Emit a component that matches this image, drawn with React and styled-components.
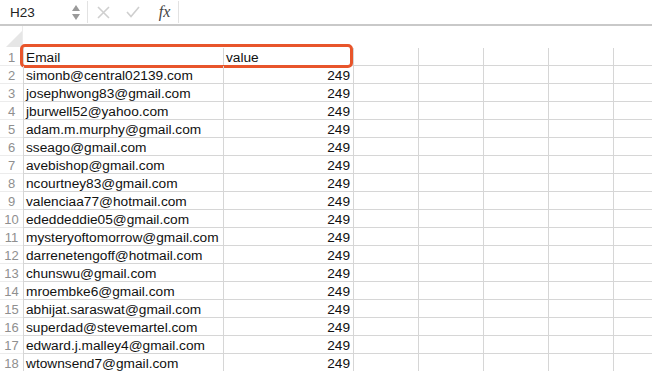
import React from "react";
import styled, { createGlobalStyle } from "styled-components";

const Global = createGlobalStyle`
  html, body { margin: 0; padding: 0; background: #fff; }
  body { font-family: "Liberation Sans", Arial, sans-serif; overflow: hidden; }
`;

const Page = styled.div`
  width: 652px;
  height: 371px;
  overflow: hidden;
  background: #fff;
`;

const Toolbar = styled.div`
  display: flex;
  align-items: center;
  height: 24px;
  border-bottom: 2px solid #c9c9c9;
`;

const NameBox = styled.div`
  width: 61px;
  padding-left: 10px;
  font-size: 13.5px;
  color: #222;
`;

const Spinner = styled.div`
  width: 10px;
  display: flex;
  flex-direction: column;
  align-items: center;
  gap: 3px;
`;

const Sep = styled.div`
  width: 1px;
  height: 22px;
  background: #e2e2e2;
  margin-left: ${(p) => p.$m || 0}px;
`;

const ToolIcon = styled.div`
  width: 30px;
  display: flex;
  justify-content: center;
  align-items: center;
  color: ${(p) => p.$c || "#c8c8c8"};
`;

const Fx = styled.span`
  font-family: "Liberation Serif", "Times New Roman", serif;
  font-style: italic;
  font-size: 16px;
  color: #444;
  margin-left: 3px;
`;

const HeaderRow = styled.div`
  display: flex;
  height: 22px;
`;

const Corner = styled.div`
  width: 23px;
  border-right: 1px solid #ececec;
  display: flex;
  align-items: flex-end;
  justify-content: flex-end;
  padding-bottom: 1px;
  box-sizing: border-box;
`;

const Row = styled.div`
  position: relative;
  display: flex;
  height: 18px;
`;

const RowNum = styled.div`
  width: 23px;
  flex: none;
  text-align: center;
  font-size: 13px;
  line-height: 17px;
  padding-top: 1px;
  color: #8f8f8f;
  border-bottom: 1px solid #ececec;
  box-sizing: border-box;
`;

const Cell = styled.div`
  flex: none;
  width: ${(p) => p.$w}px;
  box-sizing: border-box;
  border-left: 1px solid #d6d6d6;
  border-bottom: 1px solid #d6d6d6;
  font-size: 13.7px;
  line-height: 17px;
  color: #111;
  padding: 1px 3px 0 2px;
  text-align: ${(p) => (p.$right ? "right" : "left")};
  white-space: nowrap;
  overflow: visible;
`;

const Highlight = styled.div`
  position: absolute;
  left: 20px;
  top: -4px;
  width: 333px;
  height: 24px;
  box-sizing: border-box;
  border: 3px solid #e8552b;
  border-radius: 5px;
  pointer-events: none;
`;

const emails = [
  "simonb@central02139.com",
  "josephwong83@gmail.com",
  "jburwell52@yahoo.com",
  "adam.m.murphy@gmail.com",
  "sseago@gmail.com",
  "avebishop@gmail.com",
  "ncourtney83@gmail.com",
  "valenciaa77@hotmail.com",
  "ededdeddie05@gmail.com",
  "mysteryoftomorrow@gmail.com",
  "darrenetengoff@hotmail.com",
  "chunswu@gmail.com",
  "mroembke6@gmail.com",
  "abhijat.saraswat@gmail.com",
  "superdad@stevemartel.com",
  "edward.j.malley4@gmail.com",
  "wtownsend7@gmail.com",
];

const extra = [65, 65, 65, 65, 65];

function GridRow({ n, a, b, highlight }) {
  return (
    <Row>
      <RowNum>{n}</RowNum>
      <Cell $w={200}>{a}</Cell>
      <Cell $w={130} $right={typeof b === "number"}>
        {b}
      </Cell>
      {extra.map((w, i) => (
        <Cell key={i} $w={w} />
      ))}
      {highlight && <Highlight />}
    </Row>
  );
}

export default function App() {
  return (
    <Page>
      <Global />
      <Toolbar>
        <NameBox>H23</NameBox>
        <Spinner>
          <svg width="8" height="6" viewBox="0 0 8 6">
            <path d="M4 0 L8 6 L0 6 Z" fill="#9a9a9a" />
          </svg>
          <svg width="8" height="6" viewBox="0 0 8 6">
            <path d="M0 0 L8 0 L4 6 Z" fill="#9a9a9a" />
          </svg>
        </Spinner>
        <Sep $m={6} />
        <ToolIcon>
          <svg width="13" height="13" viewBox="0 0 13 13">
            <path d="M1 1 L12 12 M12 1 L1 12" stroke="#cfcfcf" strokeWidth="1.6" />
          </svg>
        </ToolIcon>
        <ToolIcon>
          <svg width="14" height="12" viewBox="0 0 14 12">
            <path d="M1 6 L5 10.5 L13 1" stroke="#cfcfcf" strokeWidth="1.6" fill="none" />
          </svg>
        </ToolIcon>
        <ToolIcon $c="#444">
          <Fx>fx</Fx>
        </ToolIcon>
        <Sep />
      </Toolbar>
      <HeaderRow>
        <Corner>
          <svg width="16" height="16" viewBox="0 0 16 16">
            <path d="M16 0 L16 16 L0 16 Z" fill="#e6e6e6" />
          </svg>
        </Corner>
      </HeaderRow>
      <GridRow n={1} a="Email" b="value" highlight />
      {emails.map((e, i) => (
        <GridRow key={i} n={i + 2} a={e} b={249} />
      ))}
    </Page>
  );
}
